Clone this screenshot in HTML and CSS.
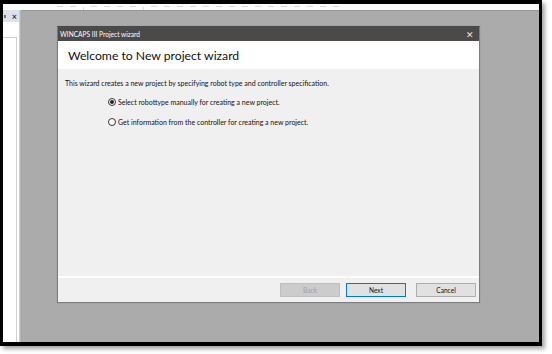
FILE: index.html
```html
<html>
  <head>
    <link rel="stylesheet" href="styles.css">
  </head>
  <body>
    <div class="screen">
      <div class="toolbar">
        <span class="tb-icon"></span><span class="tb-icon"></span><span class="tb-sep"></span>
        <span class="tb-icon"></span><span class="tb-icon"></span><span class="tb-icon"></span>
        <span class="tb-icon"></span><span class="tb-sep"></span><span class="tb-icon"></span>
        <span class="tb-icon"></span><span class="tb-icon"></span><span class="tb-icon"></span>
        <span class="tb-icon"></span><span class="tb-icon"></span><span class="tb-icon"></span>
        <span class="tb-icon"></span><span class="tb-icon"></span><span class="tb-icon"></span>
        <span class="tb-icon"></span><span class="tb-icon"></span><span class="tb-icon"></span>
        <span class="tb-icon"></span><span class="tb-icon"></span>
      </div>
      <div class="workspace">
        <aside class="dock">
          <div class="dock-head">
            <span class="dock-pin"></span>
            <span class="dock-close">×</span>
          </div>
          <div class="dock-body">
            <div class="dock-tree"></div>
          </div>
        </aside>
        <div class="splitter"></div>
        <main class="mdi">
          <div class="dialog">
            <div class="dialog-title">
              <span class="title-text">WINCAPS III Project wizard</span>
              <span class="title-close">✕</span>
            </div>
            <div class="dialog-header">
              <h1 class="heading">Welcome to New project wizard</h1>
            </div>
            <div class="dialog-body">
              <p class="intro">This wizard creates a new project by specifying robot type and controller specification.</p>
              <div class="options">
                <label class="option"><span class="radio checked"></span>Select robottype manually for creating a new project.</label>
                <label class="option"><span class="radio"></span>Get information from the controller for creating a new project.</label>
              </div>
            </div>
            <div class="dialog-footer">
              <button class="btn btn-disabled">Back</button>
              <button class="btn btn-default">Next</button>
              <button class="btn btn-cancel">Cancel</button>
            </div>
          </div>
        </main>
      </div>
    </div>
  </body>
</html>
```

FILE: styles.css
```css
body {
  margin: 0;
  background: #fff;
  font-family: Lato, "Liberation Sans", sans-serif;
}
.screen {
  width: 536px;
  height: 338px;
  border-style: solid;
  border-color: #000;
  border-width: 4px 3px 4px 3px;
  box-shadow: 3px 3px 4px rgba(0,0,0,0.35);
  display: flex;
  flex-direction: column;
  overflow: hidden;
}
.toolbar {
  height: 6px;
  background: #fbfbfb;
  display: flex;
  align-items: flex-end;
  gap: 7px;
  padding-left: 54px;
  overflow: hidden;
}
.tb-icon {
  width: 6px;
  height: 2px;
  margin-bottom: 1px;
  border-top: 1px solid #dadada;
}
.tb-sep {
  width: 1px;
  height: 3px;
  background: #dcdcdc;
}
.workspace {
  flex: 1;
  display: flex;
}
.dock {
  width: 16px;
  background: #fff;
  display: flex;
  flex-direction: column;
}
.dock-head {
  height: 12px;
  background: #dbe2ec;
  display: flex;
  align-items: center;
  justify-content: space-between;
  padding: 0 2px 0 1px;
}
.dock-pin {
  width: 2px;
  height: 3px;
  background: #6d7787;
}
.dock-close {
  font-size: 9px;
  line-height: 9px;
  font-weight: bold;
  color: #2c3440;
}
.dock-body {
  flex: 1;
  padding-top: 15px;
}
.dock-tree {
  height: 100%;
  width: 13px;
  border-top: 1px solid #cfcfcf;
  border-right: 1px solid #cfcfcf;
}
.splitter {
  width: 3px;
  background: linear-gradient(to right, #d4d4d4, #9d9d9d);
}
.mdi {
  flex: 1;
  background: #ababab;
  border-top: 1px solid #979797;
  padding: 15px 0 0 35px;
}
.dialog {
  width: 421px;
  height: 275px;
  border: 1px solid #7d7d7d;
  border-top-color: #4a4a4a;
  background: #f0f0f0;
  display: flex;
  flex-direction: column;
  box-shadow: 0 0 1px rgba(0,0,0,0.2);
}
.dialog-title {
  height: 14px;
  background: #4b4a49;
  color: #fff;
  display: flex;
  align-items: center;
  justify-content: space-between;
  padding: 0 5px 0 2px;
}
.title-text {
  font-size: 6.6px;
}
.title-close {
  font-size: 9px;
  color: #e8e8e8;
}
.dialog-header {
  height: 28px;
  background: #fff;
  display: flex;
  align-items: center;
  padding-left: 10px;
}
.heading {
  margin: 0;
  font-size: 12.2px;
  font-weight: normal;
  color: #111;
}
.dialog-body {
  flex: 1;
  padding: 10px 0 0 7px;
  font-size: 7px;
  color: #111;
}
.intro {
  margin: 0;
  line-height: 8px;
}
.options {
  display: flex;
  flex-direction: column;
  gap: 12px;
  padding: 11px 0 0 43px;
}
.option {
  display: flex;
  align-items: center;
  gap: 2px;
  line-height: 8px;
}
.radio {
  width: 6px;
  height: 6px;
  border: 1px solid #333;
  border-radius: 50%;
  background: #fff;
  display: flex;
  align-items: center;
  justify-content: center;
}
.radio.checked::after {
  content: "";
  width: 4px;
  height: 4px;
  border-radius: 50%;
  background: #222;
}
.dialog-footer {
  height: 24px;
  border-top: 2px solid #fff;
  display: flex;
  align-items: center;
  justify-content: flex-end;
  padding-right: 3px;
}
.btn {
  font-family: Lato, "Liberation Sans", sans-serif;
  font-size: 6.6px;
  width: 60px;
  height: 14px;
  margin: 0 0 0 6px;
  padding: 0;
  border: 1px solid #adadad;
  background: #e1e1e1;
  color: #111;
}
.btn-disabled {
  background: #cccccc;
  border-color: #bfbfbf;
  color: #a0a0a0;
}
.btn-default {
  border-color: #0078d7;
}
.btn-cancel {
  margin-left: 10px;
}
```
